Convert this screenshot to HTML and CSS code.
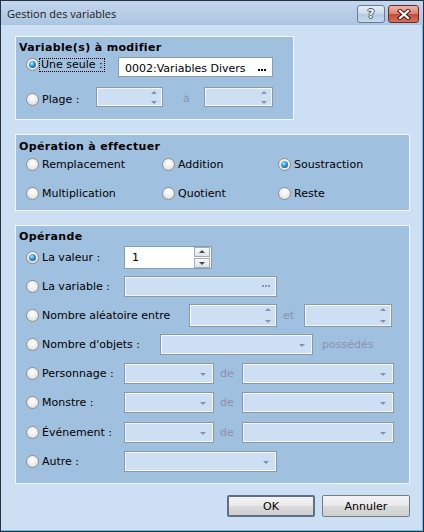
FILE: index.html
```html
<!DOCTYPE html>
<html lang="fr">
<head>
    <meta charset="UTF-8">
    <meta name="viewport" content="width=device-width, initial-scale=1.0">
    <title>Gestion des variables</title>
    <link rel="stylesheet" href="styles.css">
</head>
<body>
    <div class="window">
        <div class="titlebar">
            <span class="title">Gestion des variables</span>
            <div class="caption">
                <span class="cap-btn cap-help">?</span>
                <span class="cap-btn cap-close">
                    <svg width="14" height="11" viewBox="0 0 14 11">
                        <path d="M3 2 L11 9 M11 2 L3 9" stroke="#4a1a14" stroke-width="4.2" stroke-linecap="square" fill="none"/>
                        <path d="M3 2 L11 9 M11 2 L3 9" stroke="#ffffff" stroke-width="2.2" stroke-linecap="square" fill="none"/>
                    </svg>
                </span>
            </div>
        </div>

        <div class="client">
            <!-- Variable(s) à modifier -->
            <div class="group group-vars">
                <div class="group-title">Variable(s) à modifier</div>
                <div class="row vars-one">
                    <label class="opt w-92"><span class="radio checked"></span><span class="focus">Une seule :</span></label>
                    <div class="field white w-155">
                        <span>0002:Variables Divers</span>
                        <span class="dots"></span>
                    </div>
                </div>
                <div class="row vars-range">
                    <label class="opt w-70"><span class="radio"></span>Plage :</label>
                    <div class="field spin w-67"><span class="spin-arrows"><i class="up"></i><i class="down"></i></span></div>
                    <span class="sep sep-a">à</span>
                    <div class="field spin w-69"><span class="spin-arrows"><i class="up"></i><i class="down"></i></span></div>
                </div>
            </div>

            <!-- Opération à effectuer -->
            <div class="group group-op">
                <div class="group-title">Opération à effectuer</div>
                <div class="op-grid">
                    <label class="opt"><span class="radio"></span>Remplacement</label>
                    <label class="opt"><span class="radio"></span>Addition</label>
                    <label class="opt"><span class="radio checked"></span>Soustraction</label>
                    <label class="opt"><span class="radio"></span>Multiplication</label>
                    <label class="opt"><span class="radio"></span>Quotient</label>
                    <label class="opt"><span class="radio"></span>Reste</label>
                </div>
            </div>

            <!-- Opérande -->
            <div class="group group-operand">
                <div class="group-title">Opérande</div>
                <div class="operand-rows">
                    <div class="row">
                        <label class="opt w-98"><span class="radio checked"></span>La valeur :</label>
                        <div class="field white spin-on w-88">
                            <span>1</span>
                            <span class="spin-btns"><i class="btn-up"></i><i class="btn-down"></i></span>
                        </div>
                    </div>
                    <div class="row">
                        <label class="opt w-98"><span class="radio"></span>La variable :</label>
                        <div class="field w-153"><span></span><span class="dots off"></span></div>
                    </div>
                    <div class="row">
                        <label class="opt w-163"><span class="radio"></span>Nombre aléatoire entre</label>
                        <div class="field spin tall w-88"><span class="spin-arrows"><i class="up"></i><i class="down"></i></span></div>
                        <span class="sep sep-et">et</span>
                        <div class="field spin tall w-88"><span class="spin-arrows"><i class="up"></i><i class="down"></i></span></div>
                    </div>
                    <div class="row">
                        <label class="opt w-134"><span class="radio"></span>Nombre d'objets :</label>
                        <div class="field combo w-153"><i class="drop"></i></div>
                        <span class="sep sep-poss">possédés</span>
                    </div>
                    <div class="row">
                        <label class="opt w-98"><span class="radio"></span>Personnage :</label>
                        <div class="field combo w-90"><i class="drop"></i></div>
                        <span class="sep sep-de">de</span>
                        <div class="field combo w-152"><i class="drop"></i></div>
                    </div>
                    <div class="row">
                        <label class="opt w-98"><span class="radio"></span>Monstre :</label>
                        <div class="field combo w-90"><i class="drop"></i></div>
                        <span class="sep sep-de">de</span>
                        <div class="field combo w-152"><i class="drop"></i></div>
                    </div>
                    <div class="row">
                        <label class="opt w-98"><span class="radio"></span>Événement :</label>
                        <div class="field combo w-90"><i class="drop"></i></div>
                        <span class="sep sep-de">de</span>
                        <div class="field combo w-152"><i class="drop"></i></div>
                    </div>
                    <div class="row">
                        <label class="opt w-98"><span class="radio"></span>Autre :</label>
                        <div class="field combo w-153"><i class="drop"></i></div>
                    </div>
                </div>
            </div>

            <div class="actions">
                <button class="btn btn-default">OK</button>
                <button class="btn btn-cancel">Annuler</button>
            </div>
        </div>
    </div>
</body>
</html>
```

FILE: styles.css
```css
body {
    margin: 0;
    font-family: "DejaVu Sans", Verdana, sans-serif;
    font-size: 11px;
    color: #000;
}
.window {
    width: 424px;
    height: 532px;
    box-sizing: border-box;
    border: 1px solid #27323e;
    background: #cddff3;
    box-shadow: inset -1px -1px 0 #52c8ec;
    display: flex;
    flex-direction: column;
}
.titlebar {
    height: 24px;
    flex: none;
    display: flex;
    justify-content: space-between;
    align-items: flex-start;
    padding: 0 4px 0 6px;
    background: linear-gradient(#c3d7ed, #acc5e2);
}
.title {
    font-family: "Open Sans", sans-serif;
    font-size: 11px;
    line-height: 25px;
    color: #1a1a1a;
}
.caption {
    display: flex;
    gap: 3px;
    margin-top: 4px;
}
.cap-btn {
    height: 18px;
    box-sizing: border-box;
    border-radius: 3px;
    display: flex;
    align-items: center;
    justify-content: center;
}
.cap-help {
    width: 28px;
    border: 1px solid #6a7c94;
    background: linear-gradient(#e6eef7, #cad9ea 50%, #b4c9e2 51%, #c9daee);
    font-family: "DejaVu Sans", sans-serif;
    font-weight: bold;
    font-size: 12px;
    color: #f4f6f9;
    text-shadow: 1px 0 0 #46566c, -1px 0 0 #46566c, 0 1px 0 #46566c, 0 -1px 0 #46566c;
}
.cap-close {
    width: 31px;
    border: 1px solid #6d2a21;
    background: linear-gradient(#ecb6a8, #d98070 50%, #c44b39 51%, #d4705d);
}
.client {
    flex: 1;
    padding: 11px 0 0 14px;
}
.group {
    box-sizing: border-box;
    border: 1px solid #f2f7fc;
    background: #a0c0df;
    padding: 4px 3px 0;
}
.group-vars {
    width: 279px;
    height: 84px;
}
.group-op {
    width: 395px;
    height: 77px;
    margin-top: 14px;
    padding-top: 5px;
}
.group-operand {
    width: 395px;
    height: 259px;
    margin-top: 14px;
    padding-top: 4px;
}
.group-title {
    font-weight: bold;
    letter-spacing: 0.35px;
    height: 14px;
    line-height: 14px;
}
.row {
    display: flex;
    align-items: flex-start;
    margin-left: 7px;
}
.vars-one {
    margin-top: 2px;
}
.vars-one .opt {
    margin-top: 1px;
}
.vars-range {
    margin-top: 10px;
}
.vars-range .opt {
    margin-top: 6px;
}
.opt {
    display: flex;
    align-items: center;
    gap: 3px;
    height: 13px;
    line-height: 13px;
    white-space: nowrap;
    flex: none;
}
.focus {
    outline: 1px dotted #000;
    outline-offset: 0;
    margin-left: -2px;
    padding: 0 1px;
    line-height: 12px;
}
.radio {
    position: relative;
    width: 13px;
    height: 13px;
    flex: none;
    box-sizing: border-box;
    border-radius: 50%;
    border: 1px solid #8d8e90;
    background: radial-gradient(circle at 50% 35%, #ffffff 0%, #eeeeee 50%, #d0d0d0 100%);
}
.radio.checked::after {
    content: "";
    position: absolute;
    left: 2px;
    top: 2px;
    width: 7px;
    height: 7px;
    border-radius: 50%;
    background: radial-gradient(circle at 40% 35%, #b4ecff 0%, #3c9be0 40%, #10508f 85%);
}
.w-67 { width: 67px; }
.w-69 { width: 69px; }
.w-70 { width: 70px; }
.w-88 { width: 88px; }
.w-90 { width: 90px; }
.w-92 { width: 92px; }
.w-98 { width: 98px; }
.w-134 { width: 134px; }
.w-152 { width: 152px; }
.w-153 { width: 153px; }
.w-155 { width: 155px; }
.w-163 { width: 163px; }

.field {
    box-sizing: border-box;
    height: 21px;
    flex: none;
    border: 1px solid #8c98a8;
    background: #cddff3;
    box-shadow: inset 0 0 0 1px #f3f8fd;
    display: flex;
    align-items: center;
    justify-content: space-between;
    padding: 0 6px;
}
.field.white {
    background: #fff;
    border-color: #8a9db3;
    box-shadow: none;
}
.vars-one .field {
    height: 20px;
    padding-top: 2px;
}
.spin {
    height: 20px;
    justify-content: flex-end;
    padding-right: 5px;
}
.spin.tall {
    height: 23px;
}
.spin-arrows {
    display: flex;
    flex-direction: column;
    gap: 7px;
}
.spin.tall .spin-arrows {
    gap: 9px;
}
.up, .down, .btn-up, .btn-down, .drop {
    display: block;
    width: 0;
    height: 0;
}
.up {
    border-left: 3px solid transparent;
    border-right: 3px solid transparent;
    border-bottom: 3px solid #8d8eb2;
}
.down {
    border-left: 3px solid transparent;
    border-right: 3px solid transparent;
    border-top: 3px solid #8d8eb2;
}
.dots {
    width: 8px;
    height: 2px;
    margin-top: 3px;
    background: repeating-linear-gradient(90deg, #000 0 2px, transparent 2px 3px);
}
.dots.off {
    margin-top: 0;
    background: repeating-linear-gradient(90deg, #8d8eb2 0 2px, transparent 2px 3px);
}
.spin-on {
    height: 23px;
    padding: 0 1px 0 7px;
}
.spin-btns {
    display: flex;
    flex-direction: column;
    gap: 1px;
}
.spin-btns i {
    box-sizing: border-box;
    width: 16px;
    height: 10px;
    border: 1px solid #a3abb7;
    background: linear-gradient(#f7f8fa, #dfe4ea);
    position: relative;
}
.spin-btns i::after {
    content: "";
    position: absolute;
    left: 4px;
    width: 0;
    height: 0;
    border-left: 3px solid transparent;
    border-right: 3px solid transparent;
}
.btn-up::after {
    top: 2px;
    border-bottom: 3px solid #3b4a5e;
}
.btn-down::after {
    top: 3px;
    border-top: 3px solid #3b4a5e;
}
.combo {
    justify-content: flex-end;
    padding-right: 7px;
}
.drop {
    margin-top: 2px;
    border-left: 3.5px solid transparent;
    border-right: 3.5px solid transparent;
    border-top: 3.5px solid #8b8cae;
}
.sep {
    color: #8d8fae;
    flex: none;
    line-height: 13px;
}
.sep-a {
    width: 21px;
    padding-left: 20px;
    margin-top: 5px;
}
.sep-et {
    width: 21px;
    padding-left: 6px;
}
.sep-de {
    width: 22px;
    padding-left: 6px;
}
.sep-poss {
    margin-left: 9px;
}
.op-grid {
    display: grid;
    grid-template-columns: 136px 116px auto;
    row-gap: 16px;
    margin: 4px 0 0 7px;
}
.operand-rows {
    display: flex;
    flex-direction: column;
    gap: 7.2px;
    margin: 2px 0 0 7px;
}
.operand-rows .row {
    height: 22px;
    align-items: center;
    margin-left: 0;
}
.actions {
    width: 395px;
    display: flex;
    justify-content: flex-end;
    gap: 7px;
    margin-top: 11px;
}
.btn {
    box-sizing: border-box;
    width: 88px;
    height: 22px;
    padding: 0;
    font-family: "DejaVu Sans", Verdana, sans-serif;
    font-size: 11px;
    color: #000;
    border-radius: 2px;
    background: linear-gradient(#f4f4f4, #e8e8e8 50%, #dadada 51%, #cfcfcf);
}
.btn-default {
    border: 2px solid #5d6f8d;
}
.btn-cancel {
    border: 1px solid #727b88;
}
```
